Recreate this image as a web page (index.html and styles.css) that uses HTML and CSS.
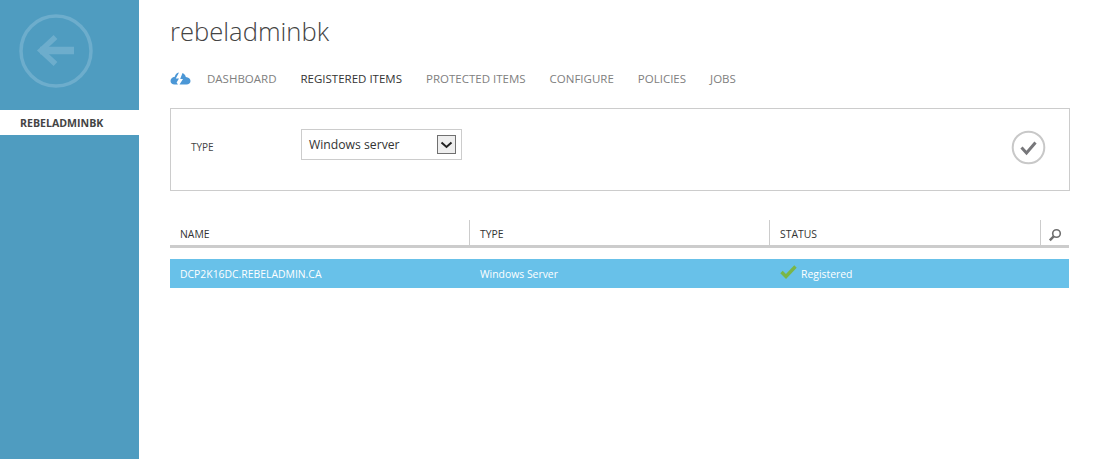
FILE: index.html
```html
<!DOCTYPE html>
<html lang="en">
<head>
<meta charset="utf-8">
<title>rebeladminbk</title>
<link rel="stylesheet" href="styles.css">
</head>
<body>
<div class="app">
  <aside class="sidebar">
    <div class="back">
      <svg class="back-icon" width="74" height="74" viewBox="0 0 74 74" fill="none">
        <circle cx="37" cy="37" r="35" stroke="#6dadcc" stroke-width="3.5"/>
        <path d="M21 36.5H55" stroke="#6dadcc" stroke-width="7.5"/>
        <path d="M36.5 23L22 36.5L36.5 50" stroke="#6dadcc" stroke-width="5.5"/>
      </svg>
    </div>
    <div class="side-item">REBELADMINBK</div>
  </aside>
  <main class="main">
    <h1 class="title">rebeladminbk</h1>
    <nav class="nav">
      <svg class="nav-icon" width="21" height="13" viewBox="0 0 21 14" preserveAspectRatio="none">
        <path d="M9 0.5C6.5 1 5 3 4.8 5.2C2.2 5.6 0.5 7.5 0.5 9.7C0.5 12 2.3 13.5 4.5 13.5H8L6.6 11.3L9 7H5.8L9 0.5Z" fill="#4b97d6"/>
        <path d="M12.5 1C14.4 2 15.5 3.6 15.8 5.4C18.6 5.6 20.5 7.5 20.5 9.8C20.5 12 18.8 13.5 16.5 13.5H9.5L13 7.5H10.2L12.5 1Z" fill="#4b97d6"/>
      </svg>
      <a class="nav-link">DASHBOARD</a>
      <a class="nav-link active">REGISTERED ITEMS</a>
      <a class="nav-link">PROTECTED ITEMS</a>
      <a class="nav-link">CONFIGURE</a>
      <a class="nav-link">POLICIES</a>
      <a class="nav-link">JOBS</a>
    </nav>
    <section class="filter">
      <span class="filter-label">TYPE</span>
      <div class="select">
        <span class="select-value">Windows server</span>
        <span class="select-btn">
          <svg width="13" height="8" viewBox="0 0 13 8" fill="none"><path d="M1.5 1.5L6.5 6L11.5 1.5" stroke="#222" stroke-width="2"/></svg>
        </span>
      </div>
      <svg class="confirm" width="35" height="35" viewBox="0 0 35 35" fill="none">
        <circle cx="17.5" cy="17.5" r="15.8" stroke="#c8c8c8" stroke-width="2"/>
        <path d="M10.5 17.5L15.5 23L24.5 12.5" stroke="#77777a" stroke-width="3"/>
      </svg>
    </section>
    <div class="grid-head">
      <div class="th th-name">NAME</div>
      <div class="th th-type">TYPE</div>
      <div class="th th-status">STATUS</div>
      <div class="th th-search">
        <svg width="14" height="14" viewBox="0 0 14 14" fill="none">
          <circle cx="8.5" cy="5.5" r="3.8" stroke="#6e6e6e" stroke-width="1.6"/>
          <path d="M5.7 8.3L1.8 12.4" stroke="#6e6e6e" stroke-width="2.4"/>
        </svg>
      </div>
    </div>
    <div class="row">
      <div class="td td-name">DCP2K16DC.REBELADMIN.CA</div>
      <div class="td td-type">Windows Server</div>
      <div class="td td-status">
        <svg class="ok" width="17" height="14" viewBox="0 0 17 14" fill="none"><path d="M1.5 7L6 11.5L15.5 1.5" stroke="#7ab648" stroke-width="3.4"/></svg>
        Registered
      </div>
    </div>
  </main>
</div>
</body>
</html>
```
FILE: styles.css
```css
* { box-sizing: border-box; }
html, body { margin: 0; height: 100%; background: #fff; overflow: hidden; }
body { font-family: "Open Sans", "Liberation Sans", sans-serif; color: #333; }
.app { display: flex; height: 459px; }
.sidebar { width: 139px; flex: none; background: #4f9cc0; }
.back { height: 110px; padding: 14px 0 0 19px; }
.back-icon { display: block; }
.side-item { height: 25px; background: #fff; padding-left: 20px; font-size: 10.6px; font-weight: 700; line-height: 27px; color: #444; white-space: nowrap; }
.main { width: 900px; margin-left: 31px; }
.title { margin: 0; height: 62px; padding-top: 13px; font-size: 25.6px; font-weight: 300; line-height: 38px; color: #444; }
.nav { display: flex; align-items: center; height: 34px; }
.nav-icon { margin-right: 16px; flex: none; margin-top: -2px; }
.nav-link { margin-right: 24px; font-size: 11.5px; color: #808080; line-height: 34px; white-space: nowrap; }
.nav-link.active { color: #333; }
.filter { display: flex; align-items: center; height: 83px; margin-top: 12px; border: 1px solid #ccc; padding: 0 23px 0 20px; }
.filter-label { width: 110px; font-size: 10px; color: #444; margin-top: -5px; }
.select { display: flex; align-items: center; justify-content: space-between; width: 161px; height: 31px; border: 1px solid #ccc; padding: 0 5px 0 7px; margin-top: -10px; }
.select-value { font-size: 12.2px; color: #333; }
.select-btn { display: flex; align-items: center; justify-content: center; width: 19px; height: 19px; background: #eee; border: 1px solid #707070; }
.confirm { margin-left: auto; margin-top: -5px; }
.grid-head { display: flex; width: 899px; height: 28px; margin-top: 29px; border-bottom: 3px solid #ccc; }
.th { height: 25px; padding-left: 10px; font-size: 10.4px; font-weight: 400; line-height: 29px; color: #333; border-right: 1px solid #ccc; }
.th-name { width: 300px; }
.th-type { width: 300px; }
.th-status { width: 271px; }
.th-search { width: 28px; border-right: 0; padding: 8px 0 0 7px; }
.th-search svg { display: block; }
.row { display: flex; width: 899px; height: 29px; margin-top: 11px; background: #68c1e9; color: #fff; }
.td { font-size: 10.4px; line-height: 30px; padding-left: 10px; white-space: nowrap; }
.td-name { width: 300px; }
.td-type { width: 300px; }
.td-status { display: flex; align-items: center; }
.ok { margin: -3px 4px 0 0; }
```
